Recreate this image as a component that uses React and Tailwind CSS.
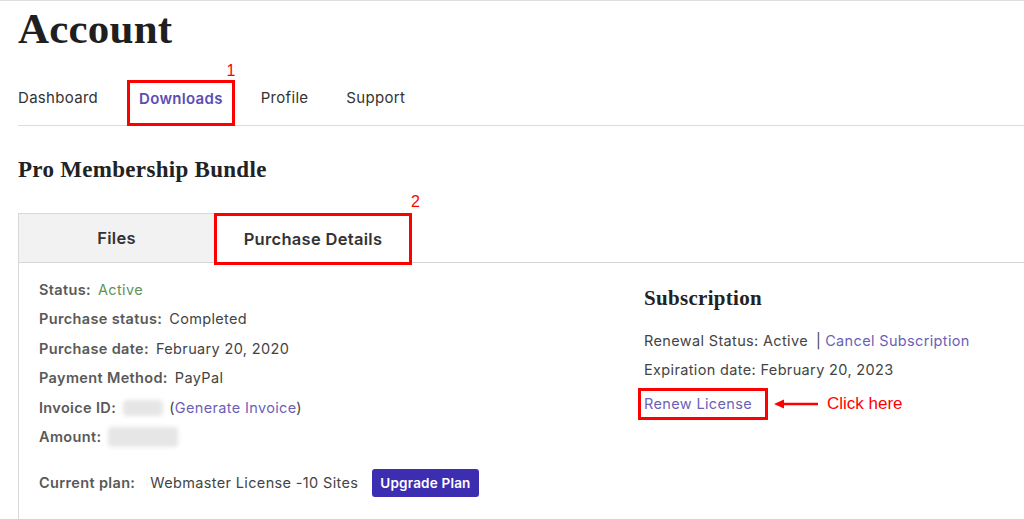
import React from 'react'

const sans = { fontFamily: 'Inter, "Open Sans", sans-serif' }

function Row({ label, children, className = '' }) {
  return (
    <div className={'flex items-center h-[29.5px] ' + className}>
      <span className="font-semibold text-[#595959] mr-[7px]">{label}</span>
      {children}
    </div>
  )
}

function Blur({ w, h }) {
  return <span className={'inline-block rounded-sm bg-[#e6e6e6] blur-[2px] ' + w + ' ' + h} />
}

export default function App() {
  const nav = ['Dashboard', 'Downloads', 'Profile', 'Support']
  return (
    <div className="w-full h-[519px] overflow-hidden bg-white border-t border-[#dedede] text-[#444]" style={sans}>
      <div className="pl-[18px]">
        <h1 className="font-['Liberation_Serif',serif] font-bold text-[43px] leading-[48px] text-[#1f1f1f] mt-[4px] tracking-[0.2px]">
          Account
        </h1>

        <div className="flex items-center mt-[27px] border-b border-[#dcdcdc] h-[46px] gap-[14px] text-[15px] tracking-[0.3px]">
          {nav.map((n, i) =>
            n === 'Downloads' ? (
              <div key={n} className="relative h-[46px] px-[9px] pb-[7px] flex items-center border-[3px] border-[#ff0000] font-semibold text-[#5b4db3]">
                {n}
                <span className="absolute -top-[24px] -right-[4px] text-[#ff0000] font-['Liberation_Sans',sans-serif] text-[16px] font-normal">1</span>
              </div>
            ) : (
              <div key={n} className={'h-[46px] pb-[9px] flex items-center text-[#333] ' + (i === 0 ? 'pr-[15px]' : 'px-[12px]')}>
                {n}
              </div>
            )
          )}
        </div>

        <h2 className="font-['Liberation_Serif',serif] font-bold text-[23px] leading-[28px] text-[#222] mt-[30px] tracking-[0.3px]">
          Pro Membership Bundle
        </h2>

        <div className="mt-[29px] border-l border-[#d9d9d9]">
          <div className="flex border-b border-[#d4d4d4] h-[50px] text-[16.5px] tracking-[0.3px]">
            <div className="w-[195px] bg-[#f2f2f2] border-t border-[#d9d9d9] flex items-center justify-center font-semibold text-[#333]">
              Files
            </div>
            <div className="relative w-[198px] border-[3px] border-[#ff0000] -mb-[3px] flex items-center justify-center font-semibold text-[#333] bg-white">
              Purchase Details
              <span className="absolute -top-[26px] -right-[11px] text-[#ff0000] font-['Liberation_Sans',sans-serif] text-[16px] font-normal tracking-normal">2</span>
            </div>
          </div>

          <div className="flex pl-[20px] pt-[12px] text-[14.5px] tracking-[0.35px] h-[260px]">
            <div className="w-[605px]">
              <Row label="Status:"><span className="text-[#5f9356]">Active</span></Row>
              <Row label="Purchase status:">Completed</Row>
              <Row label="Purchase date:">February 20, 2020</Row>
              <Row label="Payment Method:">PayPal</Row>
              <Row label="Invoice ID:">
                <Blur w="w-[40px]" h="h-[16px]" />
                <span className="ml-[6px]">(<span className="text-[#6b5fb8]">Generate Invoice</span>)</span>
              </Row>
              <Row label="Amount:">
                <Blur w="w-[70px]" h="h-[20px]" />
              </Row>
              <Row label="Current plan:" className="mt-[16px]">
                <span className="ml-[8px]">Webmaster License -10 Sites</span>
                <button className="ml-[14px] bg-[#3d2db0] text-white text-[13.5px] tracking-[0.2px] font-semibold rounded-[3px] px-[8px] h-[28px]">
                  Upgrade Plan
                </button>
              </Row>
            </div>

            <div className="pt-[10px]">
              <h3 className="font-['Liberation_Serif',serif] font-bold text-[21px] leading-[26px] text-[#222] tracking-[0.3px]">
                Subscription
              </h3>
              <div className="mt-[15px] h-[29px] flex items-center">
                Renewal Status: Active
                <span className="ml-[8px] mr-[4px]">|</span>
                <span className="text-[#6b5fb8]">Cancel Subscription</span>
              </div>
              <div className="h-[29px] flex items-center">Expiration date: February 20, 2023</div>
              <div className="flex items-center mt-[4px]">
                <div className="-ml-[6px] border-[3px] border-[#ff0000] h-[32px] w-[130px] pl-[3px] flex items-center text-[#6b5fb8]">
                  Renew License
                </div>
                <svg width="46" height="10" viewBox="0 0 46 10" className="ml-[6px]">
                  <line x1="8" y1="5" x2="44" y2="5" stroke="#ff0000" strokeWidth="2.5" />
                  <polygon points="0,5 10,0.5 10,9.5" fill="#ff0000" />
                </svg>
                <span className="ml-[7px] text-[#ff0000] text-[17px] tracking-normal font-['Liberation_Sans',sans-serif]">Click here</span>
              </div>
            </div>
          </div>
        </div>
      </div>
    </div>
  )
}
